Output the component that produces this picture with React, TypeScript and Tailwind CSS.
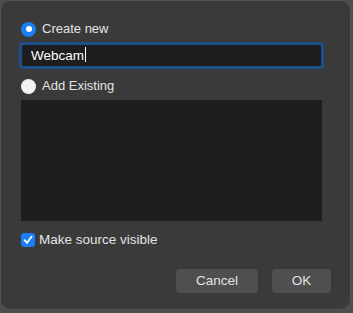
import React from "react";

const Radio = ({ checked }: { checked: boolean }) =>
  checked ? (
    <span className="flex h-[15px] w-[15px] items-center justify-center rounded-full bg-[#1a7ef5]">
      <span className="h-[6px] w-[6px] rounded-full bg-white" />
    </span>
  ) : (
    <span className="h-[15px] w-[15px] rounded-full bg-[#f2f2f2]" />
  );

export default function App() {
  return (
    <div className="h-[313px] w-[353px] bg-[#4d4d4d]" style={{ fontFamily: '"Liberation Sans", Arial, sans-serif' }}>
      <div className="flex h-[310px] w-[351px] flex-col rounded-[10px] border border-[#555555] bg-[#3a3a3a] px-[20px] pt-[20px] text-[13px] text-[#e3e3e3]">
        <label className="flex h-[16px] items-center gap-[6px]">
          <Radio checked />
          <span>Create new</span>
        </label>
        <div className="ml-[-2px] mt-[5px] h-[27px] w-[305px] rounded-[4px] border-[3px] border-[#1d508a] bg-[#1e1e1e] pl-[9px] text-[13.5px] leading-[21px] text-white">
          Webcam<span className="ml-[1px] inline-block h-[15px] w-px translate-y-[2px] bg-white" />
        </div>
        <label className="mt-[9px] flex h-[16px] items-center gap-[6px]">
          <Radio checked={false} />
          <span>Add Existing</span>
        </label>
        <div className="mt-[6px] h-[121px] w-[301px] bg-[#1e1e1e]" />
        <label className="mt-[12px] flex h-[14px] items-center gap-[4px]">
          <span className="flex h-[14px] w-[14px] items-center justify-center rounded-[3px] bg-[#1a7ef5]">
            <svg width="10" height="10" viewBox="0 0 10 10" fill="none">
              <path d="M1.5 5.2 L4 7.8 L8.6 1.8" stroke="white" strokeWidth="1.8" strokeLinecap="round" strokeLinejoin="round" />
            </svg>
          </span>
          <span className="text-[13.5px]">Make source visible</span>
        </label>
        <div className="mr-[-1px] mt-[22px] flex justify-end gap-[14px]">
          <button className="h-[24px] w-[82px] rounded-[4px] bg-[#4f4f4f] text-[13.5px] text-[#e3e3e3]">Cancel</button>
          <button className="h-[24px] w-[59px] rounded-[4px] bg-[#4f4f4f] text-[13.5px] text-[#e3e3e3]">OK</button>
        </div>
      </div>
    </div>
  );
}
